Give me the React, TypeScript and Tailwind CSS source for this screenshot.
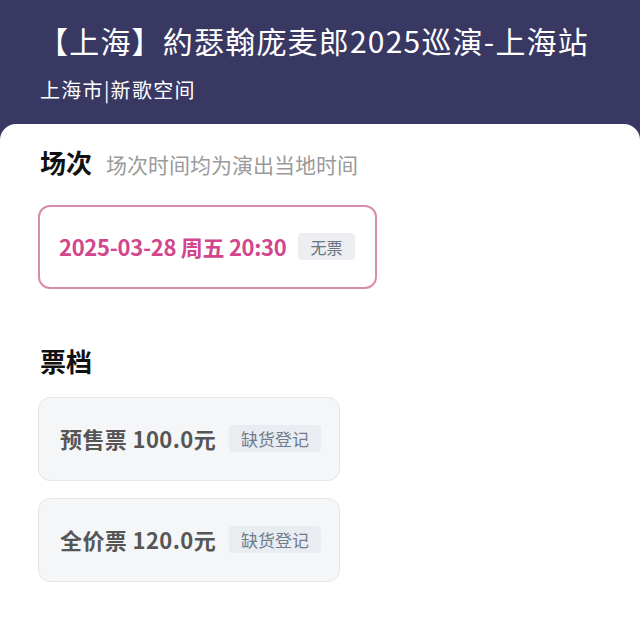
import React from 'react';

const FONT = { fontFamily: '"Noto Sans CJK SC", "Noto Sans", sans-serif' };

const tickets = [
  { id: 'presale', label: '预售票', price: '100.0元' },
  { id: 'full', label: '全价票', price: '120.0元' },
];

const TicketCard: React.FC<{ label: string; price: string }> = ({ label, price }) => (
  <div className="w-[302px] h-[84px] flex items-center pl-[21px] rounded-[12px] bg-[#f5f6f8] border border-[#e4e6ea]">
    <span className="text-[22px] font-bold text-[#565656] tracking-[0.4px]">
      {label} {price}
    </span>
    <span className="ml-[13px] h-[27px] px-[12px] flex items-center rounded-[4px] bg-[#e9ecf1] text-[17px] text-[#6f7c8f]">
      缺货登记
    </span>
  </div>
);

export default function App() {
  return (
    <div className="w-[640px] h-[644px] bg-[#393863] flex flex-col" style={FONT}>
      <header className="px-10 pt-[22px] pb-[20px] text-white">
        <h1 className="text-[30px] leading-[36px] font-normal whitespace-nowrap -ml-[2px] tracking-[1.2px]">
          【上海】約瑟翰庞麦郎2025巡演-上海站
        </h1>
        <p className="mt-[18px] text-[20px] leading-[28px] tracking-[1.3px]">上海市|新歌空间</p>
      </header>

      <main className="flex-1 bg-white rounded-t-[16px] pt-[21px] px-[38px]">
        <div className="flex items-baseline gap-[14px] pl-[2px]">
          <h2 className="text-[26px] leading-[34px] font-bold text-[#111]">场次</h2>
          <span className="text-[21px] text-[#9a9a9a]">场次时间均为演出当地时间</span>
        </div>

        <div className="mt-[24px] w-[339px] h-[84px] flex items-center pl-[19px] rounded-[12px] border-2 border-[#d98bae]">
          <span className="text-[22px] font-bold text-[#d1468d] tracking-[-0.3px]">
            2025-03-28 周五 20:30
          </span>
          <span className="ml-[12px] h-[27px] px-[12px] flex items-center rounded-[4px] bg-[#eceef2] text-[16px] text-[#6b7280]">
            无票
          </span>
        </div>

        <h2 className="mt-[55px] pl-[2px] text-[26px] leading-[34px] font-bold text-[#111]">票档</h2>

        <div className="mt-[19px] flex flex-col gap-[17px]">
          {tickets.map(t => (
            <TicketCard key={t.id} label={t.label} price={t.price} />
          ))}
        </div>
      </main>
    </div>
  );
}
